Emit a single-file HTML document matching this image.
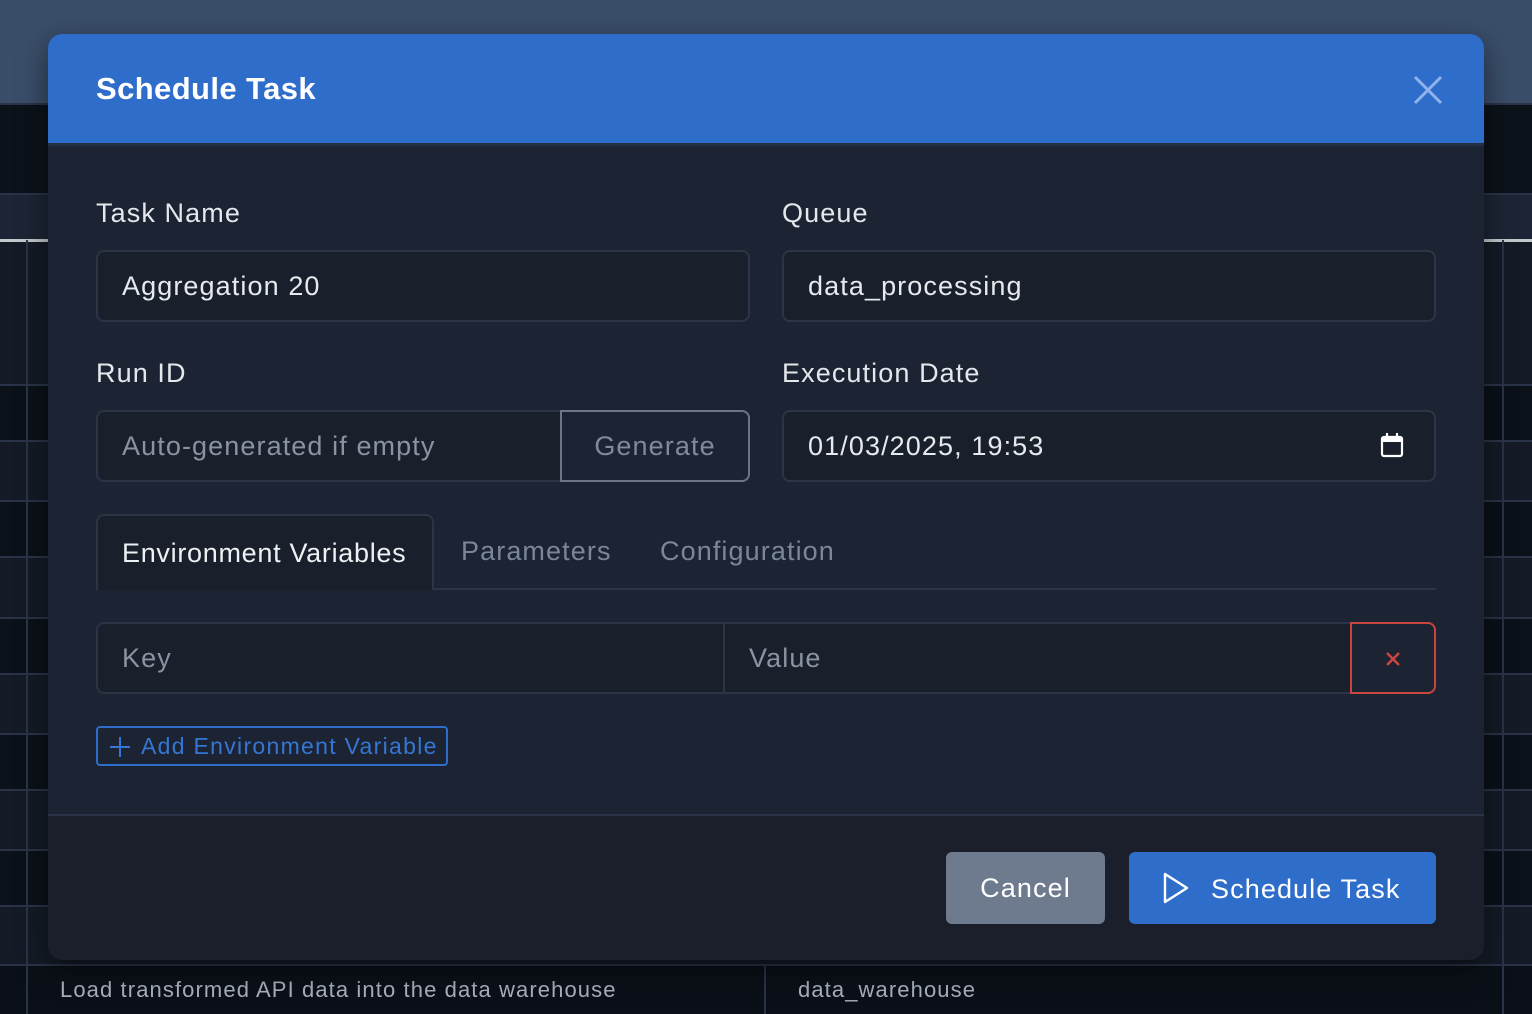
<!DOCTYPE html>
<html><head><meta charset="utf-8"><style>
*{box-sizing:border-box;margin:0;padding:0}
body{width:1532px;height:1014px;overflow:hidden;background:#141b26;font-family:"Liberation Sans",sans-serif;position:relative;letter-spacing:1.1px}
.a{position:absolute}
.lbl{color:#e4e7ec;font-size:27px}
.inp{background:#1a202b;border:2px solid #2b3548;border-radius:8px;color:#e6e9ee;font-size:27px;padding-left:24px;display:flex;align-items:center}
</style></head><body>
<div class="a" style="left:0;top:0;width:1532px;height:103px;background:#3a4e6a"></div>
<div class="a" style="left:0;top:103px;width:1532px;height:90px;background:#0c121a;border-top:2px solid #2a3448"></div>
<div class="a" style="left:0;top:193px;width:1532px;height:47px;background:#1c2535;border-top:2px solid #2a3448"></div>
<div class="a" style="left:0;top:239px;width:1532px;height:3px;background:#c4c8cd"></div>
<div class="a" style="left:0;top:384px;width:1532px;height:58px;background:#0b1119;border-top:2px solid #2a3448;border-bottom:2px solid #2a3448"></div>
<div class="a" style="left:0;top:500px;width:1532px;height:58px;background:#0b1119;border-top:2px solid #2a3448;border-bottom:2px solid #2a3448"></div>
<div class="a" style="left:0;top:617px;width:1532px;height:58px;background:#0b1119;border-top:2px solid #2a3448;border-bottom:2px solid #2a3448"></div>
<div class="a" style="left:0;top:733px;width:1532px;height:58px;background:#0b1119;border-top:2px solid #2a3448;border-bottom:2px solid #2a3448"></div>
<div class="a" style="left:0;top:849px;width:1532px;height:58px;background:#0b1119;border-top:2px solid #2a3448;border-bottom:2px solid #2a3448"></div>
<div class="a" style="left:0;top:964px;width:1532px;height:50px;background:#0b1018;border-top:2px solid #2a3448"></div>
<div class="a" style="left:26px;top:240px;width:2px;height:774px;background:#2a3448"></div>
<div class="a" style="left:1502px;top:240px;width:2px;height:774px;background:#2a3448"></div>
<div class="a" style="left:764px;top:964px;width:2px;height:50px;background:#2a3448"></div>
<div class="a" style="left:60px;top:977px;color:#aab1bc;font-size:22px">Load transformed API data into the data warehouse</div>
<div class="a" style="left:798px;top:977px;color:#aab1bc;font-size:22px">data_warehouse</div>

<div class="a" style="left:48px;top:34px;width:1436px;height:926px;border-radius:14px;overflow:hidden;background:#1c2433;box-shadow:0 10px 30px rgba(0,0,0,.5)">
 <div class="a" style="left:0;top:0;width:1436px;height:112px;background:#2f6dcb;border-bottom:3px solid #243046"></div>
 <div class="a" style="left:48px;top:37px;color:#fff;font-size:31px;font-weight:bold;letter-spacing:0.4px">Schedule Task</div>
 <svg class="a" style="left:1364px;top:40px" width="32" height="32" viewBox="0 0 32 32"><path d="M3 3L29 29M29 3L3 29" stroke="#8fb3ea" stroke-width="3"/></svg>
 <div class="a" style="left:0;top:780px;width:1436px;height:146px;background:#1a1f2b;border-top:2px solid #2a3448"></div>

 <div class="a lbl" style="left:48px;top:164px">Task Name</div>
 <div class="a lbl" style="left:734px;top:164px">Queue</div>
 <div class="a inp" style="left:48px;top:216px;width:654px;height:72px">Aggregation 20</div>
 <div class="a inp" style="left:734px;top:216px;width:654px;height:72px">data_processing</div>

 <div class="a lbl" style="left:48px;top:324px">Run ID</div>
 <div class="a lbl" style="left:734px;top:324px">Execution Date</div>
 <div class="a inp" style="left:48px;top:376px;width:654px;height:72px;color:#8993a3">Auto-generated if empty</div>
 <div class="a" style="left:512px;top:376px;width:190px;height:72px;border:2px solid #6a7586;border-radius:0 8px 8px 0;background:#1c2433;color:#7f8a9c;font-size:27px;display:flex;align-items:center;justify-content:center">Generate</div>
 <div class="a inp" style="left:734px;top:376px;width:654px;height:72px">01/03/2025, 19:53</div>
 <svg class="a" style="left:1332px;top:398px" width="24" height="26" viewBox="0 0 24 26"><rect x="2" y="5" width="20" height="19" rx="2" fill="none" stroke="#fff" stroke-width="2.2"/><rect x="2" y="5" width="20" height="5" fill="#fff"/><path d="M7 1v5M17 1v5" stroke="#fff" stroke-width="2.2"/></svg>

 <div class="a" style="left:48px;top:554px;width:1340px;height:2px;background:#2b3548"></div>
 <div class="a" style="left:48px;top:480px;width:338px;height:76px;background:#1a202b;border:2px solid #2b3548;border-bottom:none;border-radius:8px 8px 0 0;color:#eef0f3;font-size:27px;padding:22px 0 0 24px;letter-spacing:0.7px">Environment Variables</div>
 <div class="a" style="left:413px;top:502px;color:#7a869a;font-size:27px">Parameters</div>
 <div class="a" style="left:612px;top:502px;color:#7a869a;font-size:27px">Configuration</div>

 <div class="a inp" style="left:48px;top:588px;width:640px;height:72px;border-radius:8px 0 0 8px;color:#8993a3">Key</div>
 <div class="a inp" style="left:675px;top:588px;width:640px;height:72px;border-radius:0;color:#8993a3">Value</div>
 <div class="a" style="left:1302px;top:588px;width:86px;height:72px;border:2px solid #c9453f;border-radius:0 8px 8px 0;background:#1c2433"></div>
 <svg class="a" style="left:1338px;top:618px" width="14" height="14" viewBox="0 0 14 14"><path d="M1 1L13 13M13 1L1 13" stroke="#d0453e" stroke-width="2.4"/></svg>

 <div class="a" style="left:48px;top:692px;width:352px;height:40px;border:2px solid #2f6dcb;border-radius:4px;color:#3576d4;font-size:23px;padding:5px 0 0 43px;letter-spacing:1.3px">Add Environment Variable</div>
 <svg class="a" style="left:61px;top:702px" width="22" height="22" viewBox="0 0 22 22"><path d="M11 1v20M1 11h20" stroke="#3576d4" stroke-width="2"/></svg>

 <div class="a" style="left:898px;top:818px;width:159px;height:72px;background:#6e7a8e;border-radius:6px;color:#fff;font-size:27px;display:flex;align-items:center;justify-content:center">Cancel</div>
 <div class="a" style="left:1081px;top:818px;width:307px;height:72px;background:#2f6dcb;border-radius:6px;color:#fff;font-size:27px;padding:22px 0 0 82px">Schedule Task</div>
 <svg class="a" style="left:1114px;top:838px" width="28" height="32" viewBox="0 0 28 32"><path d="M3 2L25 16L3 30Z" fill="none" stroke="#fff" stroke-width="2.4" stroke-linejoin="round"/></svg>
</div>
</body></html>
